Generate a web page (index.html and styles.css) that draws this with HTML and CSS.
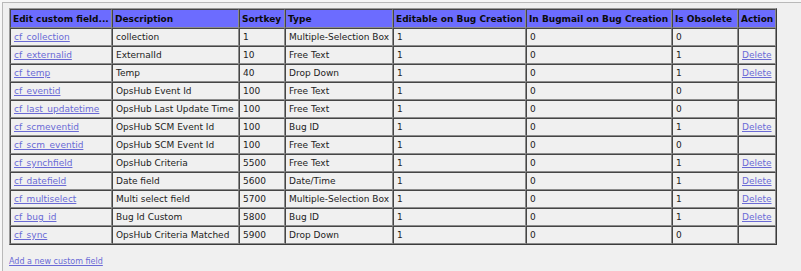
FILE: index.html
```html
<!DOCTYPE html>
<html>
<head>
<meta charset="utf-8">
<title>Custom fields</title>
<link rel="stylesheet" href="styles.css">
</head>
<body>
<div class="page">
  <table class="fields">
    <colgroup>
      <col class="c-name"><col class="c-desc"><col class="c-sort"><col class="c-type">
      <col class="c-edit"><col class="c-mail"><col class="c-obs"><col class="c-act">
    </colgroup>
    <thead>
      <tr>
        <th>Edit custom field...</th>
        <th>Description</th>
        <th>Sortkey</th>
        <th>Type</th>
        <th>Editable on Bug Creation</th>
        <th>In Bugmail on Bug Creation</th>
        <th>Is Obsolete</th>
        <th>Action</th>
      </tr>
    </thead>
    <tbody>
      <tr><td><a href="#">cf_collection</a></td><td>collection</td><td>1</td><td>Multiple-Selection Box</td><td>1</td><td>0</td><td>0</td><td></td></tr>
      <tr><td><a href="#">cf_externalid</a></td><td>ExternalId</td><td>10</td><td>Free Text</td><td>1</td><td>0</td><td>1</td><td><a href="#">Delete</a></td></tr>
      <tr><td><a href="#">cf_temp</a></td><td>Temp</td><td>40</td><td>Drop Down</td><td>1</td><td>0</td><td>1</td><td><a href="#">Delete</a></td></tr>
      <tr><td><a href="#">cf_eventid</a></td><td>OpsHub Event Id</td><td>100</td><td>Free Text</td><td>1</td><td>0</td><td>0</td><td></td></tr>
      <tr><td><a href="#">cf_last_updatetime</a></td><td>OpsHub Last Update Time</td><td>100</td><td>Free Text</td><td>1</td><td>0</td><td>0</td><td></td></tr>
      <tr><td><a href="#">cf_scmeventid</a></td><td>OpsHub SCM Event Id</td><td>100</td><td>Bug ID</td><td>1</td><td>0</td><td>1</td><td><a href="#">Delete</a></td></tr>
      <tr><td><a href="#">cf_scm_eventid</a></td><td>OpsHub SCM Event Id</td><td>100</td><td>Free Text</td><td>1</td><td>0</td><td>0</td><td></td></tr>
      <tr><td><a href="#">cf_synchfield</a></td><td>OpsHub Criteria</td><td>5500</td><td>Free Text</td><td>1</td><td>0</td><td>1</td><td><a href="#">Delete</a></td></tr>
      <tr><td><a href="#">cf_datefield</a></td><td>Date field</td><td>5600</td><td>Date/Time</td><td>1</td><td>0</td><td>1</td><td><a href="#">Delete</a></td></tr>
      <tr><td><a href="#">cf_multiselect</a></td><td>Multi select field</td><td>5700</td><td>Multiple-Selection Box</td><td>1</td><td>0</td><td>1</td><td><a href="#">Delete</a></td></tr>
      <tr><td><a href="#">cf_bug_id</a></td><td>Bug Id Custom</td><td>5800</td><td>Bug ID</td><td>1</td><td>0</td><td>1</td><td><a href="#">Delete</a></td></tr>
      <tr><td><a href="#">cf_sync</a></td><td>OpsHub Criteria Matched</td><td>5900</td><td>Drop Down</td><td>1</td><td>0</td><td>0</td><td></td></tr>
    </tbody>
  </table>
  <p class="add"><a href="#">Add a new custom field</a></p>
</div>
</body>
</html>
```

FILE: styles.css
```css
html, body {
  margin: 0;
  padding: 0;
  background: #f7f7f7;
  height: 100%;
}

body {
  font-family: "DejaVu Sans", Verdana, sans-serif;
  font-size: 9px;
  color: #222;
  padding: 2px 0 0 2px;
  box-sizing: border-box;
}

.page {
  background: #f0f0f0;
  border-top: 1px solid #b9b9b9;
  border-left: 1px solid #b9b9b9;
  padding: 5px 6px 0 6px;
  height: 100%;
  box-sizing: border-box;
}

.fields {
  border-collapse: separate;
  border-spacing: 0;
  table-layout: fixed;
  width: 768px;
  border: 1px solid;
  border-color: #9a9a9a #3c3c3c #3c3c3c #9a9a9a;
  background: #f0f0f0;
}

.c-name { width: 102px; }
.c-desc { width: 127px; }
.c-sort { width: 46px; }
.c-type { width: 108px; }
.c-edit { width: 133px; }
.c-mail { width: 146px; }
.c-obs  { width: 66px; }
.c-act  { width: 38px; }

.fields th,
.fields td {
  box-sizing: border-box;
  border: 1px solid;
  border-color: #454545 #8c8c8c #8c8c8c #454545;
  padding: 0 2px 0 3px;
  white-space: nowrap;
  text-align: left;
  vertical-align: middle;
  overflow: visible;
}

.fields th {
  height: 19px;
  background: #6c6cff;
  color: #0a0a0a;
  font-weight: bold;
  padding-left: 2px;
}

.fields td {
  height: 18px;
}

a {
  color: #6a6ad6;
  text-decoration: underline;
}

.add {
  margin: 12px 0 0 0;
  padding-left: 0;
  font-size: 8px;
}
```
